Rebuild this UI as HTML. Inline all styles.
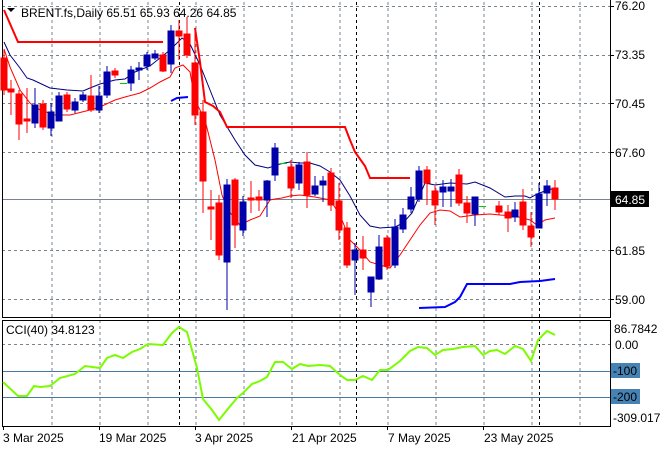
<!DOCTYPE html>
<html><head><style>
html,body{margin:0;padding:0;background:#fff;}
svg{display:block;font-family:"Liberation Sans",sans-serif;}
</style></head><body>
<svg width="660" height="450" viewBox="0 0 660 450" xmlns="http://www.w3.org/2000/svg">
<rect width="660" height="450" fill="#fff"/>
<g stroke="#7a8290" stroke-width="1" stroke-dasharray="3,3" fill="none">
<path d="M52 2V317M100 2V317M148 2V317M196 2V317M244 2V317M292 2V317M340 2V317M388 2V317M436 2V317M484 2V317M532 2V317M580 2V317"/>
<path d="M2 6.5H610M2 55.5H610M2 103.5H610M2 152.5H610M2 250.5H610M2 299.5H610"/>
<path d="M52 320V426M100 320V426M148 320V426M196 320V426M244 320V426M292 320V426M340 320V426M388 320V426M436 320V426M484 320V426M532 320V426M580 320V426"/>
<path d="M2 344.5H610"/>
</g>
<g stroke="#000" stroke-width="1" stroke-dasharray="3,3">
<path d="M179.5 2V317M356.5 2V317M539.5 2V317M179.5 320V426M356.5 320V426M539.5 320V426"/>
</g>
<path d="M2 199.5H610" stroke="#7a8290" stroke-width="1"/>
<path d="M2 371.5H610M2 397.5H610" stroke="#4a78a0" stroke-width="1"/>
<path d="M2.5 0V317.5H610.5V0" fill="none" stroke="#000"/>
<path d="M2.5 320.5H610.5V426.5H2.5Z" fill="none" stroke="#000"/>
<polyline fill="none" stroke="#000080" stroke-width="1" points="4,42 10,55 20,68 27,78 33,80 50,88 67,90 83,91 90,88 100,84 115,80 125,79 135,72 150,66 170,50 182,38 190,44 200,65 210,90 220,115 235,140 245,155 255,165 268,168 280,164 290,162 300,163 310,163 320,166 330,172 340,180 350,196 360,215 370,226 380,228 395,227 403,223 412,213 425,183 435,185 450,183 467,184 475,182 490,188 505,197 515,196 525,196 530,198 537,194 545,191 555,188"/>
<polyline fill="none" stroke="#ff0000" stroke-width="1" points="4,49 10,67 20,90 30,103 40,110 55,115 70,115 90,110 100,107 115,100 125,97 140,93 150,88 160,82 170,77 175,68 183,65 190,72 195,100 205,120 215,160 222,195 228,210 240,225 250,220 260,216 270,200 275,199 282,198 290,196 300,195 315,197 330,200 340,215 350,240 360,250 370,262 390,268 400,255 410,240 420,225 430,213 440,210 450,211 460,217 475,215 490,214 500,215 515,216 530,220 537,225 545,220 555,218"/>
<polyline fill="none" stroke="#ff0000" stroke-width="2" points="4,10 18,42 163,42"/>
<polyline fill="none" stroke="#ff0000" stroke-width="2" points="195,28 200,62 205,102 213,106 220,112 227,127 345,127 350,140 355,152 365,166 370,178 410,178"/>
<polyline fill="none" stroke="#0000ff" stroke-width="2" points="171,101 177,98 188,97"/>
<polyline fill="none" stroke="#0000ff" stroke-width="2" points="419,308 445,307 455,302 460,297 467,284 510,284 520,282 540,281 555,279"/>
<g>
<g stroke="#ff0000" fill="#ff0000">
<path d="M4 50V95M11 80V115M19 90V140M27 88V133M43 100V130M67 92V112M91 75V112M115 68V78M163 52V72M179 20V60M187 17V58M195 28V125M203 100V213M211 190V240M219 195V260M235 178V248M251 181V213M259 190V211M291 160V198M307 152V208M331 168V211M339 183V240M347 222V268M363 236V270M387 235V270M427 166V205M435 186V225M459 169V206M467 196V223M499 201V215M508 205V232M523 189V230M531 212V247M555 180V210"/>
<rect x="1" y="58" width="6" height="32"/><rect x="8" y="89" width="6" height="3"/><rect x="16" y="94" width="6" height="30"/><rect x="24" y="119" width="6" height="2"/><rect x="40" y="104" width="6" height="23"/><rect x="64" y="95" width="6" height="14"/><rect x="88" y="96" width="6" height="14"/><rect x="112" y="71" width="6" height="4"/><rect x="160" y="55" width="6" height="16"/><rect x="176" y="31" width="6" height="5"/><rect x="184" y="34" width="6" height="21"/><rect x="192" y="63" width="6" height="52"/><rect x="200" y="112" width="6" height="69"/><rect x="208" y="207" width="6" height="2"/><rect x="216" y="203" width="6" height="52"/><rect x="232" y="180" width="6" height="45"/><rect x="248" y="198" width="6" height="2"/><rect x="256" y="197" width="6" height="3"/><rect x="288" y="167" width="6" height="21"/><rect x="304" y="162" width="6" height="33"/><rect x="328" y="173" width="6" height="32"/><rect x="336" y="201" width="6" height="29"/><rect x="344" y="228" width="6" height="37"/><rect x="360" y="250" width="6" height="8"/><rect x="384" y="238" width="6" height="28"/><rect x="424" y="170" width="6" height="13"/><rect x="432" y="191" width="6" height="14"/><rect x="456" y="175" width="6" height="28"/><rect x="464" y="203" width="6" height="10"/><rect x="496" y="206" width="6" height="6"/><rect x="505" y="212" width="6" height="6"/><rect x="520" y="202" width="6" height="23"/><rect x="528" y="226" width="6" height="11"/><rect x="552" y="188" width="6" height="11"/>
</g>
<g stroke="#0000aa" fill="#0000aa">
<path d="M35 88V128M51 103V136M59 92V121M75 98V113M83 92V102M99 86V113M107 66V98M131 66V91M139 62V80M147 52V70M155 50V60M171 25V73M227 179V310M243 196V236M267 180V217M275 143V181M299 162V190M315 176V196M323 176V202M355 243V295M371 277V307M379 235V280M395 219V268M403 208V233M411 187V213M419 166V202M443 180V207M451 179V207M475 197V226M515 202V222M539 183V228M547 180V206"/>
<rect x="32" y="105" width="6" height="18"/><rect x="48" y="112" width="6" height="16"/><rect x="56" y="96" width="6" height="25"/><rect x="72" y="102" width="6" height="8"/><rect x="80" y="95" width="6" height="5"/><rect x="96" y="96" width="6" height="14"/><rect x="104" y="72" width="6" height="23"/><rect x="128" y="70" width="6" height="13"/><rect x="136" y="68" width="6" height="2"/><rect x="144" y="55" width="6" height="11"/><rect x="152" y="54" width="6" height="4"/><rect x="168" y="31" width="6" height="33"/><rect x="224" y="185" width="6" height="77"/><rect x="240" y="202" width="6" height="28"/><rect x="264" y="181" width="6" height="19"/><rect x="272" y="148" width="6" height="27"/><rect x="296" y="165" width="6" height="18"/><rect x="312" y="186" width="6" height="8"/><rect x="320" y="181" width="6" height="4"/><rect x="352" y="250" width="6" height="10"/><rect x="368" y="277" width="6" height="15"/><rect x="376" y="247" width="6" height="32"/><rect x="392" y="227" width="6" height="38"/><rect x="400" y="215" width="6" height="14"/><rect x="408" y="197" width="6" height="12"/><rect x="416" y="171" width="6" height="28"/><rect x="440" y="187" width="6" height="5"/><rect x="448" y="187" width="6" height="4"/><rect x="472" y="197" width="6" height="17"/><rect x="512" y="210" width="6" height="7"/><rect x="536" y="194" width="6" height="34"/><rect x="544" y="186" width="6" height="7"/>
</g>
<path d="M120 83.5H127M280 163.5H287M479 206.5H486" stroke="#00cc00" stroke-width="1"/>
</g>
<polyline fill="none" stroke="#7cfc00" stroke-width="2" points="3,382 18,396 27,396 34,386 40,387 50,386 60,378 75,374 85,366 100,368 107,358 115,355 123,358 132,352 140,349 148,344 163,345 172,333 179,327 187,332 197,368 203,399 212,410 219,420 227,410 237,398 243,393 252,384 260,381 267,377 275,362 283,362 292,369 300,364 308,366 320,365 330,366 340,375 347,380 355,380 363,376 372,380 380,370 388,370 400,361 410,351 418,347 427,348 435,355 443,350 453,349 463,347 475,346 483,355 490,351 497,350 505,354 515,346 523,349 531,361 538,340 547,331 555,335"/>
<g font-size="12" fill="#000">
<path d="M7 8H15L11 12Z" fill="#000"/>
<text x="21" y="17">BRENT.fs,Daily  65.51 65.93 64.26 64.85</text>
<text x="6" y="334">CCI(40) 34.8123</text>
<text x="615" y="10">76.20</text>
<text x="615" y="59">73.35</text>
<text x="615" y="108">70.45</text>
<text x="615" y="157">67.60</text>
<text x="615" y="255">61.85</text>
<text x="615" y="304">59.00</text>
<rect x="611" y="191" width="38" height="16" fill="#000"/>
<text x="615" y="204" fill="#fff">64.85</text>
<text x="614" y="333">86.7842</text>
<text x="615" y="349">0.00</text>
<rect x="611" y="363" width="29" height="15" fill="#4682b4"/>
<text x="613" y="375">-100</text>
<rect x="611" y="389" width="29" height="15" fill="#4682b4"/>
<text x="613" y="401">-200</text>
<text x="613" y="422">-309.017</text>
<text x="3" y="442">3 Mar 2025</text>
<text x="99" y="442">19 Mar 2025</text>
<text x="195" y="442">3 Apr 2025</text>
<text x="292" y="442">21 Apr 2025</text>
<text x="388" y="442">7 May 2025</text>
<text x="484" y="442">23 May 2025</text>
</g>
<path d="M610 6.5H614M610 55.5H614M610 103.5H614M610 152.5H614M610 250.5H614M610 299.5H614M3.5 426V430M99.5 426V430M195.5 426V430M291.5 426V430M387.5 426V430M483.5 426V430" stroke="#000"/>
</svg>
</body></html>
